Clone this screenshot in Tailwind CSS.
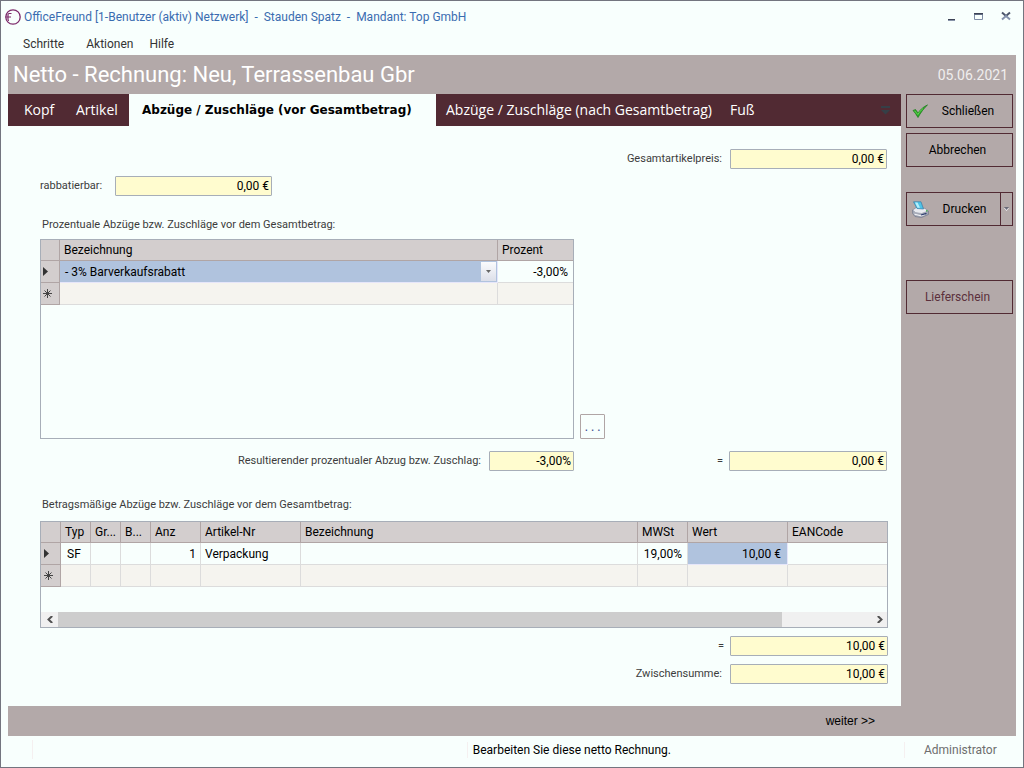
<!DOCTYPE html>
<html lang="de">
<head>
<meta charset="utf-8">
<meta name="viewport" content="width=device-width, initial-scale=1">
<title>OfficeFreund</title>
<script src="https://cdn.jsdelivr.net/npm/@tailwindcss/browser@4"></script>
</head>
<body class="flex min-h-screen flex-col border border-[#73757f] bg-[#f8fffd] font-[Roboto,sans-serif] text-xs text-black">

<header>
  <div class="flex h-8 items-center pl-1 pr-3">
    <svg class="mr-[3px] size-4 shrink-0" viewBox="0 0 16 16" fill="none" stroke="#7d2a6b" aria-hidden="true">
      <circle cx="8" cy="8" r="7.200" stroke-width="1.300"/>
      <path d="M6.500 4.500H4Q3 4.500 3 5.500V10.500Q3 11.500 4 11.500M0.500 8H6" stroke-width="1.200"/>
    </svg>
    <h1 class="whitespace-pre text-[#3a6cb0]">OfficeFreund [1-Benutzer (aktiv) Netzwerk]  -  Stauden Spatz  -  Mandant: Top GmbH</h1>
    <div class="ml-auto flex items-center gap-4">
      <button aria-label="Minimieren"><svg class="h-3 w-[11px]" viewBox="0 0 11 12"><path d="M2 8h7v1H2z" fill="#3d4356"/><path d="M2 9h7v1H2z" fill="#8792a8"/></svg></button>
      <button aria-label="Maximieren"><svg class="h-3 w-[11px]" viewBox="0 0 11 12"><path d="M1 2h9v1H1z" fill="#3d4356"/><path d="M1 3h9v1H1z" fill="#5f6b82"/><path d="M1.500 4v4.500h8V4" fill="none" stroke="#7e8ca6"/></svg></button>
      <button aria-label="Fenster schließen"><svg class="h-3 w-[11px]" viewBox="0 0 11 12" fill="none" stroke-width="2"><path d="M2 1.500L6 5l4-3.500" stroke="#4b556b"/><path d="M2 8.500L6 5l4 3.500" stroke="#8492ad"/></svg></button>
    </div>
  </div>
  <nav class="flex h-[22px] items-center pl-[22px] text-[#333]">
    <button class="mr-[22px]">Schritte</button>
    <button class="mr-4">Aktionen</button>
    <button>Hilfe</button>
  </nav>
</header>

<main class="mx-[7px] flex flex-1 flex-col bg-[#b3a9a9]">
  <div class="flex h-[39px] items-center justify-between pl-[5px] pr-2 text-white">
    <h2 class="text-[22px]">Netto - Rechnung: Neu, Terrassenbau Gbr</h2>
    <span class="text-sm text-[#f0eeee]">05.06.2021</span>
  </div>

  <div class="flex flex-1">
    <section class="flex min-w-0 flex-1 flex-col">
      <div role="tablist" class="flex h-8 items-stretch bg-[#512a33] font-['Open_Sans',sans-serif] text-sm text-white">
        <button role="tab" class="w-[57px] pl-4 text-left">Kopf</button>
        <button role="tab" class="w-16 pl-[11px] text-left">Artikel</button>
        <button role="tab" aria-selected="true" class="w-[307px] bg-[#f8fffd] pl-[13px] text-left font-['DejaVu_Sans',sans-serif] text-xs font-bold text-black">Abzüge / Zuschläge (vor Gesamtbetrag)</button>
        <button role="tab" class="w-[284px] pl-2.5 text-left">Abzüge / Zuschläge (nach Gesamtbetrag)</button>
        <button role="tab" class="px-2.5">Fuß</button>
        <button class="ml-auto mr-[11px]" aria-label="Weitere Reiter"><svg class="h-[9px] w-[9px]" viewBox="0 0 9 9" fill="#353f47"><path d="M0 0h9v2H0zM0 4h9L4.500 8.500z"/></svg></button>
      </div>

      <form class="flex-1 bg-[#f8fffd] pb-[22px] pl-8 pr-[13px] pt-[23px] text-[#3c3c3c]">
        <div class="mr-px flex items-center justify-end gap-2">
          <label for="gesamt" class="text-[11px]">Gesamtartikelpreis:</label>
          <input id="gesamt" value="0,00 €" class="h-5 w-[157px] rounded-[1px] border border-[#a7aeb8] bg-[#fffccf] px-0.5 text-right text-black">
        </div>
        <div class="mt-[7px] flex items-center">
          <label for="rab" class="w-[75px] text-[11px]">rabbatierbar:</label>
          <input id="rab" value="0,00 €" class="h-5 w-[157px] rounded-[1px] border border-[#a7aeb8] bg-[#fffccf] px-0.5 text-right text-black">
        </div>

        <h3 class="mt-5 pl-0.5 text-[11px] leading-[18px]">Prozentuale Abzüge bzw. Zuschläge vor dem Gesamtbetrag:</h3>
        <div class="mt-[5px] flex items-end gap-1.5">
          <div class="h-[200px] w-[534px] border border-[#a7aeb8]">
            <table class="w-full table-fixed border-separate border-spacing-0 text-left leading-4 text-black">
              <colgroup><col class="w-[19px]"><col><col class="w-[75px]"></colgroup>
              <thead>
                <tr class="h-[21px] bg-[#d3cece]">
                  <th class="border-b border-r border-[#b0a5a5] p-0"></th>
                  <th class="border-b border-r border-[#b0a5a5] px-1 py-0 font-normal">Bezeichnung</th>
                  <th class="border-b border-[#b0a5a5] px-1 py-0 font-normal">Prozent</th>
                </tr>
              </thead>
              <tbody>
                <tr class="h-[22px]">
                  <th class="border-b border-r border-[#b0a5a5] bg-[#d3cece] p-0"><svg class="ml-0.5 h-[9px] w-[5px]" viewBox="0 0 5 9"><path d="M0 0l5 4.500L0 9z" fill="#333"/></svg></th>
                  <td class="border-b border-r border-[#e6e6fa] bg-[#b0c3de] p-0">
                    <div class="flex h-[21px] items-center justify-between pl-[5px] pr-px">
                      <span>- 3% Barverkaufsrabatt</span>
                      <button type="button" aria-label="Auswahl öffnen" class="flex h-[19px] w-[15px] items-center justify-center bg-linear-to-b from-[#fbfbfd] to-[#dcdfe9]"><svg class="h-[3px] w-[5px]" viewBox="0 0 5 3"><path d="M0 0h5L2.500 3z" fill="#666"/></svg></button>
                    </div>
                  </td>
                  <td class="border-b border-[#dcdcdc] py-0 pl-0 pr-[5px] text-right">-3,00%</td>
                </tr>
                <tr class="h-[22px] bg-[#f5f4ef]">
                  <th class="border-b border-r border-[#b0a5a5] bg-[#d3cece] p-0"><svg class="ml-0.5 size-[9px]" viewBox="0 0 9 9" fill="none" stroke="#444"><path d="M4.500 0v9M0 4.500h9M1.500 1.500l6 6M7.500 1.500l-6 6"/></svg></th>
                  <td class="border-b border-r border-[#dcdcdc] p-0"></td>
                  <td class="border-b border-[#dcdcdc] p-0"></td>
                </tr>
              </tbody>
            </table>
          </div>
          <button type="button" class="h-[25px] w-[25px] rounded-[1px] border border-[#b0a5a5] font-['Open_Sans',sans-serif] text-[#3a4a90]">. . .</button>
        </div>

        <div class="mr-px mt-3 flex items-center">
          <label for="proz" class="w-[441px] text-right text-[11px]">Resultierender prozentualer Abzug bzw. Zuschlag:</label>
          <input id="proz" value="-3,00%" class="ml-2 h-5 w-[85px] rounded-[1px] border border-[#a7aeb8] bg-[#fffccf] px-0.5 text-right text-black">
          <label for="prozbetrag" class="ml-auto mr-1.5 text-[11px]">=</label>
          <input id="prozbetrag" value="0,00 €" class="h-5 w-[158px] rounded-[1px] border border-[#a7aeb8] bg-[#fffccf] px-0.5 text-right text-black">
        </div>

        <h3 class="mt-[25px] pl-0.5 text-[11px] leading-[18px]">Betragsmäßige Abzüge bzw. Zuschläge vor dem Gesamtbetrag:</h3>
        <div class="mt-[7px] flex h-[107px] flex-col border border-[#a7aeb8]">
          <table class="w-full table-fixed border-separate border-spacing-0 text-left leading-4 text-black">
            <colgroup><col class="w-[20px]"><col class="w-[30px]"><col class="w-[30px]"><col class="w-[30px]"><col class="w-[50px]"><col class="w-[100px]"><col><col class="w-[50px]"><col class="w-[100px]"><col class="w-[99px]"></colgroup>
            <thead>
              <tr class="h-[21px] bg-[#d3cece]">
                <th class="border-b border-r border-[#b0a5a5] p-0"></th>
                <th class="border-b border-r border-[#b0a5a5] py-0 pl-1 pr-0 font-normal">Typ</th>
                <th class="border-b border-r border-[#b0a5a5] py-0 pl-1 pr-0 font-normal">Gr...</th>
                <th class="border-b border-r border-[#b0a5a5] py-0 pl-1 pr-0 font-normal">B...</th>
                <th class="border-b border-r border-[#b0a5a5] py-0 pl-1 pr-0 font-normal">Anz</th>
                <th class="border-b border-r border-[#b0a5a5] py-0 pl-1 pr-0 font-normal">Artikel-Nr</th>
                <th class="border-b border-r border-[#b0a5a5] py-0 pl-1 pr-0 font-normal">Bezeichnung</th>
                <th class="border-b border-r border-[#b0a5a5] py-0 pl-1 pr-0 font-normal">MWSt</th>
                <th class="border-b border-r border-[#b0a5a5] py-0 pl-1 pr-0 font-normal">Wert</th>
                <th class="border-b border-[#b0a5a5] py-0 pl-1 pr-0 font-normal">EANCode</th>
              </tr>
            </thead>
            <tbody>
              <tr class="h-[22px]">
                <th class="border-b border-r border-[#b0a5a5] bg-[#d3cece] p-0"><svg class="ml-[3px] h-[9px] w-[5px]" viewBox="0 0 5 9"><path d="M0 0l5 4.500L0 9z" fill="#333"/></svg></th>
                <td class="border-b border-r border-[#dcdcdc] py-0 pl-1.5 pr-0">SF</td>
                <td class="border-b border-r border-[#dcdcdc] p-0"></td>
                <td class="border-b border-r border-[#dcdcdc] p-0"></td>
                <td class="border-b border-r border-[#dcdcdc] px-1 py-0 text-right">1</td>
                <td class="border-b border-r border-[#dcdcdc] px-1 py-0">Verpackung</td>
                <td class="border-b border-r border-[#dcdcdc] p-0"></td>
                <td class="border-b border-r border-[#dcdcdc] py-0 pl-0 pr-[5px] text-right">19,00%</td>
                <td class="border-b border-r border-[#e6e6fa] bg-[#b0c3de] py-0 pl-0 pr-1.5 text-right">10,00 €</td>
                <td class="border-b border-[#dcdcdc] p-0"></td>
              </tr>
              <tr class="h-[22px] bg-[#f5f4ef]">
                <th class="border-b border-r border-[#b0a5a5] bg-[#d3cece] p-0"><svg class="ml-[3px] size-[9px]" viewBox="0 0 9 9" fill="none" stroke="#444"><path d="M4.500 0v9M0 4.500h9M1.500 1.500l6 6M7.500 1.500l-6 6"/></svg></th>
                <td class="border-b border-r border-[#dcdcdc] p-0"></td>
                <td class="border-b border-r border-[#dcdcdc] p-0"></td>
                <td class="border-b border-r border-[#dcdcdc] p-0"></td>
                <td class="border-b border-r border-[#dcdcdc] p-0"></td>
                <td class="border-b border-r border-[#dcdcdc] p-0"></td>
                <td class="border-b border-r border-[#dcdcdc] p-0"></td>
                <td class="border-b border-r border-[#dcdcdc] p-0"></td>
                <td class="border-b border-r border-[#dcdcdc] p-0"></td>
                <td class="border-b border-[#dcdcdc] p-0"></td>
              </tr>
            </tbody>
          </table>
          <div class="mt-auto flex h-[15px] bg-[#f0f0f0]">
            <button type="button" aria-label="Nach links" class="flex w-[17px] items-center justify-center"><svg class="h-[7px] w-1.5" viewBox="0 0 6 7" fill="none" stroke="#505050" stroke-width="2"><path d="M5.200 0L1.500 3.500 5.200 7"/></svg></button>
            <div class="flex-1"><div class="h-full w-[89%] bg-[#cdcdcd]"></div></div>
            <button type="button" aria-label="Nach rechts" class="flex w-[15px] items-center justify-center"><svg class="h-[7px] w-1.5" viewBox="0 0 6 7" fill="none" stroke="#505050" stroke-width="2"><path d="M.8 0l3.700 3.500L.8 7"/></svg></button>
          </div>
        </div>

        <div class="mt-2 flex items-center justify-end gap-1.5">
          <label for="betrag" class="text-[11px]">=</label>
          <input id="betrag" value="10,00 €" class="h-5 w-[158px] rounded-[1px] border border-[#a7aeb8] bg-[#fffccf] px-0.5 text-right text-black">
        </div>
        <div class="mt-2 flex items-center justify-end gap-2">
          <label for="zwischen" class="text-[11px]">Zwischensumme:</label>
          <input id="zwischen" value="10,00 €" class="h-5 w-[158px] rounded-[1px] border border-[#a7aeb8] bg-[#fffccf] px-0.5 text-right text-black">
        </div>
      </form>
    </section>

    <aside class="flex w-[115px] flex-col pl-[5px] pr-[3px]">
      <button class="flex h-[34px] items-center border border-[#512a33] pl-[5px]">
        <svg class="h-[15px] w-4" viewBox="0 0 16 15" aria-hidden="true"><path d="M1 6.500L3.500 5.500 6 9C8.500 5.500 11.500 2.500 15.500 1 12 4 8.500 9 6 13.500 4.500 11 3 8.500 1 6.500z" fill="#2bab25" stroke="#197a18" stroke-width=".7"/><path d="M2.500 6.700L5.800 10.500C7 8.500 9 6 11 4.500" fill="none" stroke="#74dd62" stroke-width=".8"/></svg>
        <span class="flex-1 pr-1 text-center">Schließen</span>
      </button>
      <button class="mt-[5px] h-[34px] border border-[#512a33] pr-1">Abbrechen</button>
      <div class="mt-[25px] flex h-[34px] border border-[#512a33]">
        <button class="flex flex-1 items-center pl-[5px]">
          <svg class="size-[17px]" viewBox="0 0 17 17" aria-hidden="true">
            <path d="M.6 9L4.500 6.500 13 7.500l3.400 2.500v3.500L9.500 16.500 3 15.500.6 12.500z" fill="#a9adba" stroke="#70768a" stroke-width=".7"/>
            <path d="M.8 9L3.500 11.500 9.500 12.500 16 10 13 7.500 4.500 6.500z" fill="#e9ebf0" stroke="#8b90a0" stroke-width=".5"/>
            <path d="M1.500.8L9 .8 11.500 8 5 7.500z" fill="#4fc4e8" stroke="#3b7da6" stroke-width=".7"/>
            <path d="M3 1.600L5.500 1.400 8 6.800 5.500 6.800z" fill="#b7effb"/>
            <path d="M2.500 13.200L9 14.800 13 13.500" fill="none" stroke="#f5f6f9"/>
            <path d="M9 14L14.500 12.300" stroke="#2e3d70" stroke-width="1.300"/><path d="M14 9.800h1.500" stroke="#35a43c" stroke-width="1.300"/>
          </svg>
          <span class="flex-1 text-center">Drucken</span>
        </button>
        <button aria-label="Druckoptionen" class="flex w-3 items-center justify-center border-l border-[#512a33]"><svg class="h-1 w-[5px]" viewBox="0 0 5 4"><path d="M0 1h5L2.500 4z" fill="#f4f4f8"/><path d="M0 0h5L2.500 3z" fill="#6a6a78"/></svg></button>
      </div>
      <button class="mt-[54px] h-[34px] border border-[#512a33] pr-1 text-[#5b303c]">Lieferschein</button>
    </aside>
  </div>

  <div class="flex h-[30px] items-center justify-end pr-[141px]">
    <button class="font-['Liberation_Sans',sans-serif]">weiter &gt;&gt;</button>
  </div>
</main>

<footer class="flex h-[31px] items-center px-[7px] pb-1">
  <span class="ml-6 h-[19px] w-px bg-[#f5f0f0]"></span>
  <p class="flex h-[19px] flex-1 items-center justify-end pr-[233px]"><span class="border-l border-[#f5f0f0] pl-[5px]">Bearbeiten Sie diese netto Rechnung.</span></p>
  <p class="w-[112px] border-l border-[#f5f0f0] pl-[19px] text-[#6e6e6e]">Administrator</p>
</footer>
</body>
</html>
